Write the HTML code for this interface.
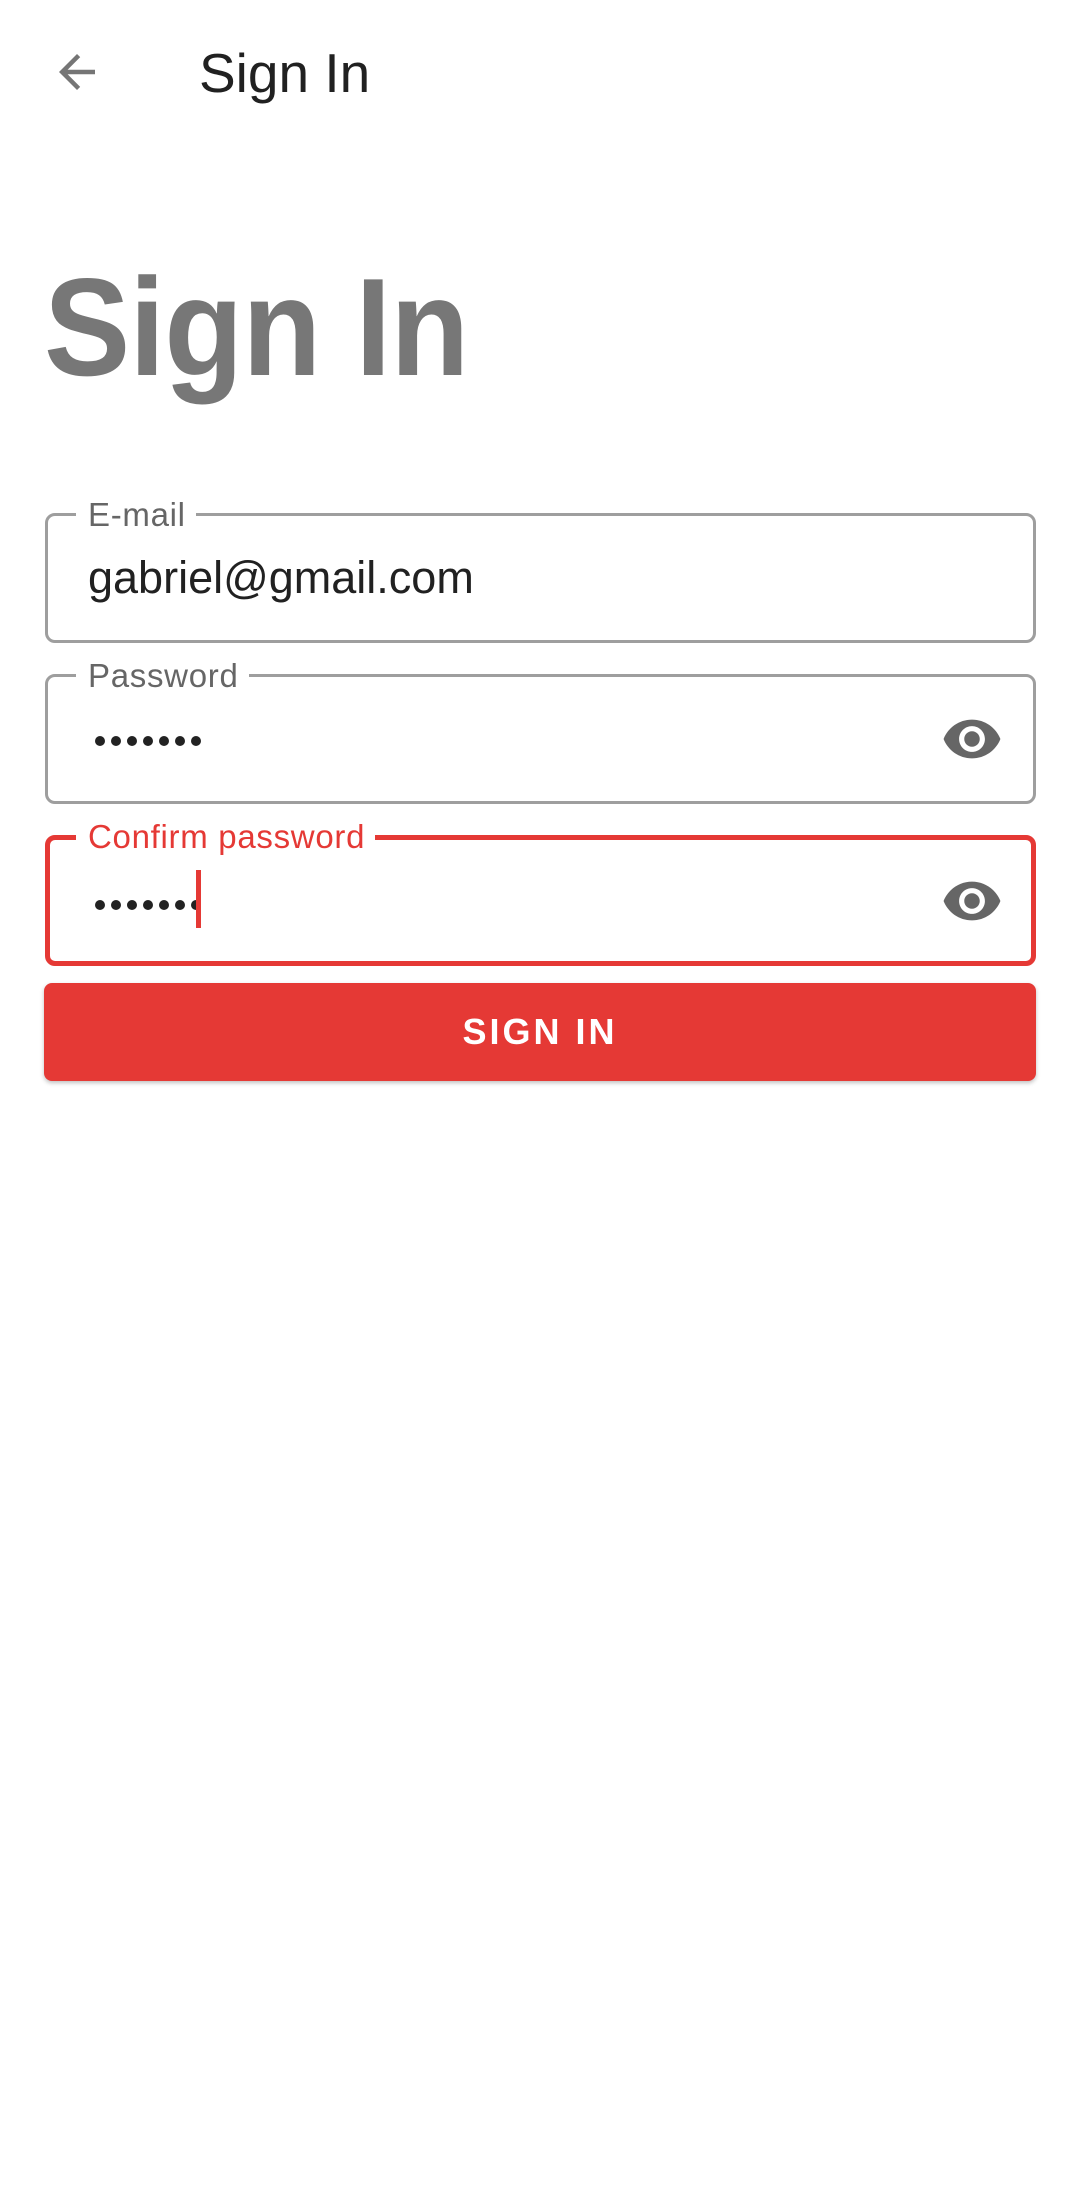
<!DOCTYPE html>
<html><head><meta charset="utf-8"><style>
*{margin:0;padding:0;box-sizing:border-box}
body{width:1080px;height:2200px;background:#fff;font-family:"Liberation Sans",Roboto,sans-serif;position:relative;overflow:hidden}
.abs{position:absolute}
.field{position:absolute;left:45px;width:991px;border:3px solid #9e9e9e;border-radius:10px}
.lab{position:absolute;top:-21px;left:28px;padding:0 10px 0 12px;background:#fff;font-size:33px;color:#666;line-height:40px;letter-spacing:0.7px}
.dots{position:absolute;left:47px;display:flex;gap:6px}
.dots i{display:block;width:10px;height:10px;border-radius:50%;background:#222}
.eye{position:absolute;right:30px;width:62px;height:62px}
</style></head><body>
<svg class="abs" style="left:50px;top:45px" width="54" height="54" viewBox="0 0 24 24"><path d="M20 11H7.83l5.59-5.59L12 4l-8 8 8 8 1.41-1.41L7.83 13H20v-2z" fill="#757575"/></svg>
<div class="abs" style="left:199px;top:42px;font-size:55px;color:#212121;line-height:62px">Sign In</div>
<div class="abs" style="left:44px;top:253px;font-size:139px;font-weight:bold;color:#777;line-height:150px;letter-spacing:-1px;transform:scaleX(0.93);transform-origin:left">Sign In</div>

<div class="field" style="top:513px;height:130px">
  <div class="lab">E-mail</div>
  <div class="abs" style="left:40px;top:36px;font-size:45px;color:#212121;line-height:52px">gabriel@gmail.com</div>
</div>
<div class="field" style="top:674px;height:130px">
  <div class="lab">Password</div>
  <div class="dots" style="top:59px"><i></i><i></i><i></i><i></i><i></i><i></i><i></i></div>
  <svg class="eye" style="top:31px" viewBox="0 0 24 24"><path fill="#666" d="M12 4.5C7 4.5 2.73 7.61 1 12c1.73 4.39 6 7.5 11 7.5s9.27-3.11 11-7.5c-1.73-4.39-6-7.5-11-7.5zM12 17c-2.76 0-5-2.24-5-5s2.24-5 5-5 5 2.24 5 5-2.24 5-5 5zm0-8c-1.66 0-3 1.34-3 3s1.34 3 3 3 3-1.34 3-3-1.34-3-3-3z"/></svg>
</div>
<div class="field" style="top:835px;height:131px;border:5px solid #e53935">
  <div class="lab" style="color:#e53935;top:-23px;left:26px">Confirm password</div>
  <div class="dots" style="top:60px;left:45px"><i></i><i></i><i></i><i></i><i></i><i></i><i></i></div>
  <div class="abs" style="left:146px;top:30px;width:5px;height:58px;background:#e53935"></div>
  <svg class="eye" style="top:30px;right:28px" viewBox="0 0 24 24"><path fill="#666" d="M12 4.5C7 4.5 2.73 7.61 1 12c1.73 4.39 6 7.5 11 7.5s9.27-3.11 11-7.5c-1.73-4.39-6-7.5-11-7.5zM12 17c-2.76 0-5-2.24-5-5s2.24-5 5-5 5 2.24 5 5-2.24 5-5 5zm0-8c-1.66 0-3 1.34-3 3s1.34 3 3 3 3-1.34 3-3-1.34-3-3-3z"/></svg>
</div>
<div class="abs" style="left:44px;top:983px;width:992px;height:98px;background:#e53935;border-radius:8px;box-shadow:0 2px 4px rgba(0,0,0,0.25);color:#fff;font-size:36px;font-weight:bold;letter-spacing:3px;text-align:center;line-height:98px">SIGN IN</div>
</body></html>
